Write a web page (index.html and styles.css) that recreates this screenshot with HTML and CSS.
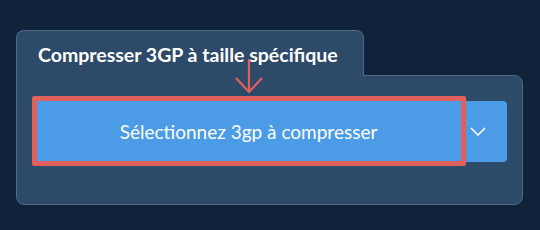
FILE: index.html
```html
<!DOCTYPE html>
<html lang="fr">
<head>
    <meta charset="UTF-8">
    <title>Compresser 3GP</title>
    <link rel="stylesheet" href="styles.css">
</head>
<body>
    <div class="page">
        <div class="tab">Compresser 3GP à taille spécifique</div>
        <div class="panel">
            <div class="btn-group">
                <button class="btn-main">Sélectionnez 3gp à compresser</button>
                <button class="btn-drop">
                    <svg width="16" height="9" viewBox="0 0 16 9"><path d="M1 1 L8 8 L15 1" fill="none" stroke="#fff" stroke-width="1.6"/></svg>
                </button>
                <!-- annotation -->
                <div class="highlight"></div>
                <svg class="pointer" width="30" height="36" viewBox="0 0 30 36">
                    <path d="M14 0 V33 M1 19 L14 33 L27 19" fill="none" stroke="#e0605c" stroke-width="2.2"/>
                </svg>
            </div>
        </div>
    </div>
</body>
</html>
```

FILE: styles.css
```css
body {
    margin: 0;
    background-color: #11233a;
    font-family: Lato, "Open Sans", sans-serif;
}
.page {
    padding: 30px 0 0 16px;
}
.tab {
    position: relative;
    z-index: 1;
    width: 348px;
    height: 46px;
    box-sizing: border-box;
    margin-bottom: -1px;
    padding: 12px 0 0 21px;
    background-color: #2d4a69;
    border: 1px solid #4b6785;
    border-bottom: none;
    border-radius: 8px 8px 0 0;
    color: #fff;
    font-weight: bold;
    font-size: 19.5px;
}
.panel {
    width: 507px;
    height: 130px;
    box-sizing: border-box;
    padding: 25px 15px 0 15px;
    background-color: #2d4a69;
    border: 1px solid #4b6785;
    border-radius: 0 8px 8px 8px;
}
.btn-group {
    position: relative;
    display: flex;
    height: 61px;
}
.btn-group button {
    border: none;
    background-color: #4b9be6;
    color: #fff;
    font-family: inherit;
    cursor: pointer;
}
.btn-main {
    width: 433px;
    font-size: 19px;
    border-radius: 4px 0 0 4px;
}
.btn-drop {
    flex: 1;
    padding: 0 16px 0 0;
    border-radius: 0 4px 4px 0;
    display: flex;
    align-items: center;
    justify-content: center;
}
.highlight {
    position: absolute;
    left: 0;
    top: -5px;
    width: 434px;
    height: 70px;
    box-sizing: border-box;
    border: 5px solid #e0605c;
    border-radius: 2px;
}
.pointer {
    position: absolute;
    z-index: 2;
    left: 203px;
    top: -42px;
}
```
